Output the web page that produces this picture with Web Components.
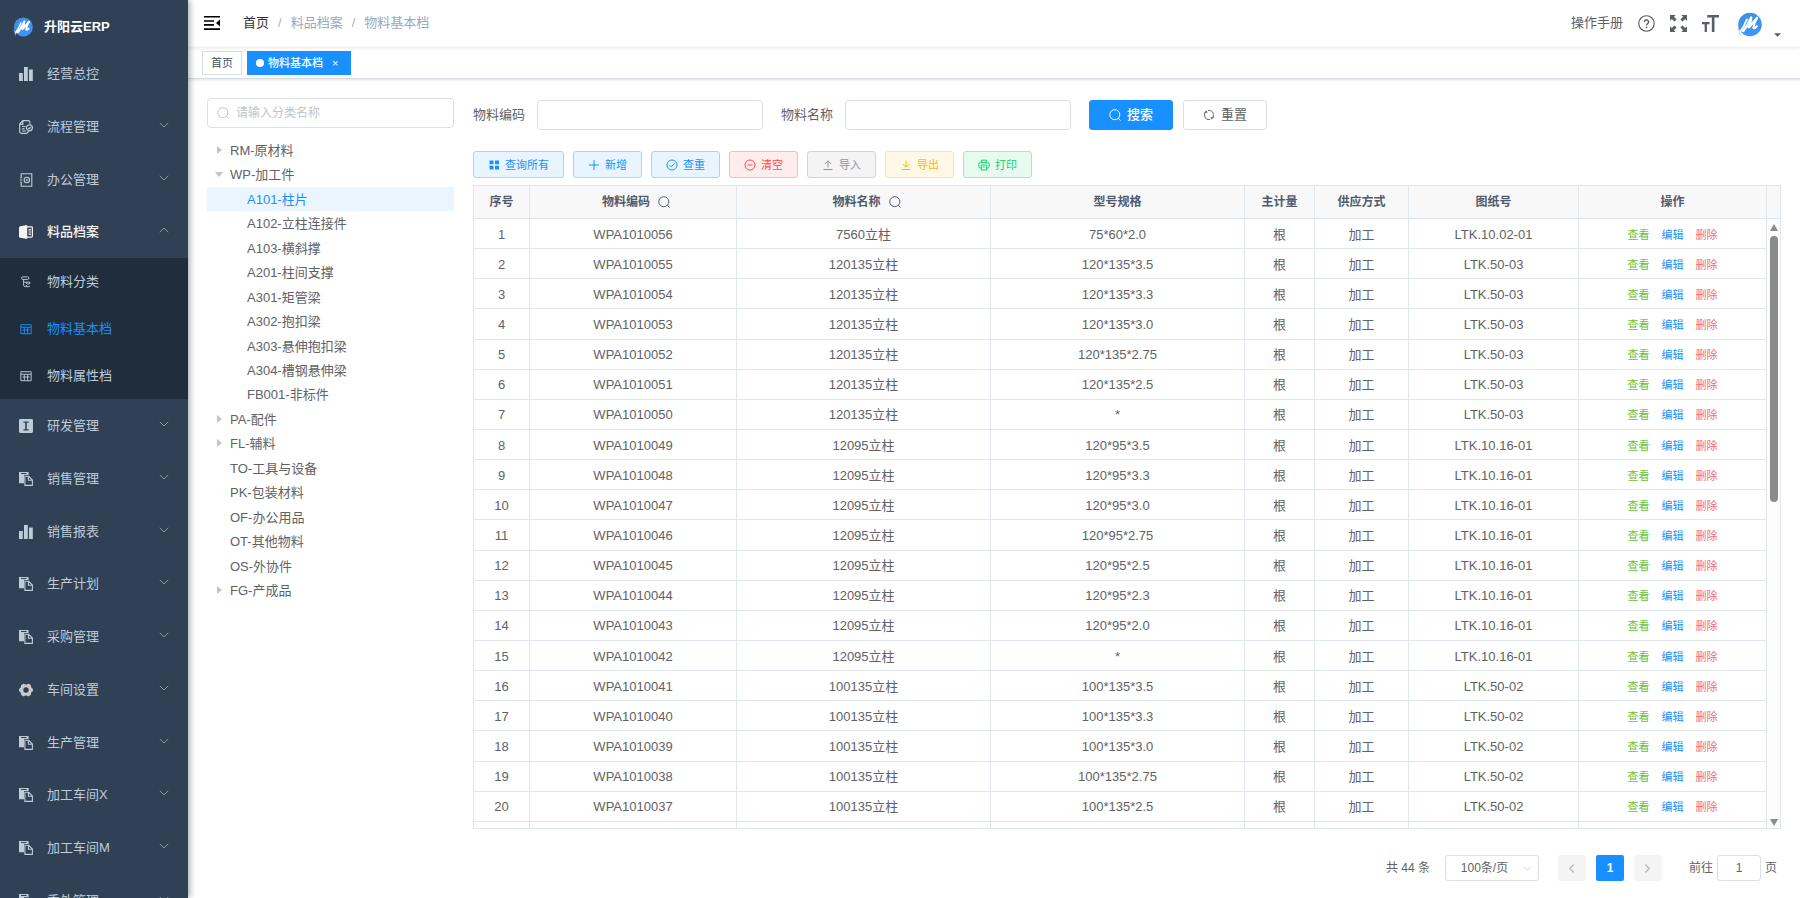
<!DOCTYPE html>
<html lang="zh-CN">
<head>
<meta charset="utf-8">
<meta name="viewport" content="width=device-width, initial-scale=1">
<title>升阳云ERP - 物料基本档</title>
<style>
html, body { margin: 0; height: 100%; overflow: hidden; }
body {
  font: 13px/20px "Liberation Sans", "Noto Sans CJK SC", sans-serif;
  color: #606266;
  background: #fff;
  --primary: #1890ff;
  --line: #dfe6ec;
  --field: #dcdfe6;
}
</style>
</head>
<body>
<erp-app></erp-app>

<script>
const BASE = `
  *, *::before, *::after { box-sizing: border-box; }
  button, input, select { font: inherit; color: inherit; margin: 0; }
  button { cursor: pointer; }
  a { color: inherit; text-decoration: none; }
  ul, ol { list-style: none; margin: 0; padding: 0; }
`;

function define(name, css, render) {
  customElements.define(name, class extends HTMLElement {
    constructor() {
      super();
      this.attachShadow({ mode: 'open' });
    }
    connectedCallback() {
      const t = document.createElement('template');
      t.innerHTML = `<style>${BASE}${css}</style>${render(this)}`;
      this.shadowRoot.replaceChildren(t.content.cloneNode(true));
    }
  });
}

/* ---------- icons ---------- */
const ICONS = {
  chart: ['0 0 14 14', '<path fill="currentColor" d="M0 6h3.8v8H0zM5 0h3.8v14H5zM10 2.6h3.8V14H10z"/>'],
  flow: ['0 0 14 14', '<g fill="none" stroke="currentColor" stroke-width="1.2"><path d="M8.5 13.3H2.2a1.5 1.5 0 0 1-1.5-1.5V4l3-3.3h5.6a1.5 1.5 0 0 1 1.5 1.5v1.6M.8 4.3h3V1M3 6.5h3.500M3 8.8h2.6M3 11h4"/><circle cx="10.4" cy="7.800" r="3"/><path d="M9 7.800l1.1 1.1 1.600-2M9.500 10.800L8.500 13"/></g>'],
  office: ['0 0 14 14', '<g fill="none" stroke="currentColor" stroke-width="1.1"><path d="M2.2 4V.7h10.6v12.6H2.2V10"/><path d="M1 4.8h2.2M1 7h2.2M1 9.2h2.2"/><circle cx="7.8" cy="7" r="2.7"/></g><circle cx="7.8" cy="7" r="1" fill="currentColor"/>'],
  book: ['0 0 14 14', '<path fill="currentColor" d="M8.200 0v14L1.4 12.8Q0 12.5 0 11.4V2.7q0-1.1 1.4-1.4z"/><path fill="none" stroke="currentColor" stroke-width="1.200" d="M8 1.9h4.6q.8 0 .8.8v8.6q0 .8-.8.8H8M9.500 4.800h2.600M9.500 7h2.600M9.500 9.200h2.600"/>'],
  tree: ['0 0 14 14', '<g fill="none" stroke="currentColor" stroke-width="1.1"><rect x="1.800" y="1" width="8.600" height="3" rx="1.500"/><path d="M4.2 4v6.6q0 1.800 1.800 1.800h5.400M4.200 7.200h7.200"/><path d="M7.400 7.200q-.400 2 1 2h3V7M7.400 10.500v1.900"/></g>'],
  table: ['0 0 14 14', '<path fill="none" stroke="currentColor" stroke-width="1.1" d="M1 2h12v10.500H1zM1 5h12M3 8.200h8M5 5v7.500M9 5v7.500"/>'],
  research: ['0 0 14 14', '<path fill="currentColor" fill-rule="evenodd" d="M1.4 0h11.2Q14 0 14 1.4v11.2q0 1.4-1.4 1.4H1.4Q0 14 0 12.6V1.4Q0 0 1.4 0zM4.4 2.6v1.2h1.8v6.4H4.4v1.2h5.2v-1.2H7.8V3.8h1.8V2.6z"/>'],
  clip: ['0 0 14 14', '<path fill="currentColor" fill-rule="evenodd" d="M0 0h9.6v3H5v8.2H0zM2 1v.9h5.6V1z"/><path fill="none" stroke="currentColor" stroke-width="1.1" d="M5.9 4.2h3.8L13.4 8v5.4H5.9zM9.4 4.4v3.8h3.8"/>'],
  gear: ['0 0 14 14', '<path fill="#c9c9c9" fill-rule="evenodd" d="M4.2.7Q5.2.6 5.8 1.2q1.2.8 2.4 0 .6-.6 1.6-.5l1.9 1.2q.5.7.3 1.6 0 1.3 1.2 1.7.8.4.8 1.8t-.8 1.8Q12 9.2 12 10.5q.2.9-.3 1.6l-1.9 1.2q-1 .1-1.6-.5-1.2-.8-2.4 0-.6.6-1.6.5l-1.9-1.2q-.5-.7-.3-1.6 0-1.3-1.2-1.7Q0 8.400 0 7t.8-1.800Q2 4.800 2 3.500q-.2-.9.3-1.600zM7 4.300a2.700 2.700 0 1 0 0 5.400 2.700 2.700 0 0 0 0-5.400z"/>'],
  down: ['0 0 10 6', '<path fill="none" stroke="currentColor" stroke-width="1" d="M.8.8L5 5 9.200.8"/>'],
  up: ['0 0 10 6', '<path fill="none" stroke="currentColor" stroke-width="1" d="M.8 5.200L5 1l4.200 4.200"/>'],
  left: ['0 0 8 12', '<path fill="none" stroke="currentColor" stroke-width="1.500" d="M6.500 1.500L2 6l4.500 4.500"/>'],
  right: ['0 0 8 12', '<path fill="none" stroke="currentColor" stroke-width="1.500" d="M1.500 1.500L6 6l-4.500 4.500"/>'],
  fold: ['0 0 16 14', '<path fill="currentColor" d="M0 0h16v1.600H0zM0 4.200h10v1.600H0zM0 8.100h10v1.600H0zM0 12.300h16v1.600H0zM16 3.500v7L12 7z"/>'],
  search: ['0 0 12 12', '<g fill="none" stroke="currentColor"><circle cx="5.800" cy="5.700" r="5"/><path d="M9.300 9.300l2.200 2.200"/></g>'],
  help: ['0 0 18 18', '<g fill="none" stroke="currentColor" stroke-width="1.200"><circle cx="9" cy="9" r="8.200"/><path stroke-width="1.500" d="M6.800 7.300a2.200 2.200 0 1 1 3.400 1.800Q9 9.900 9 11.200"/></g><circle cx="9" cy="13" r=".9" fill="currentColor"/>'],
  full: ['0 0 18 18', '<path fill="currentColor" d="M0 0h6L4.200 1.900 7 4.700 4.700 7 1.900 4.200 0 6zM18 0h-6l1.800 1.900L11 4.700 13.300 7l2.800-2.800L18 6zM0 18h6l-1.800-1.900L7 13.300 4.700 11l-2.800 2.800L0 12zM18 18h-6l1.800-1.900-2.800-2.800 2.300-2.300 2.800 2.800L18 12z"/>'],
  size: ['0 0 18 18', '<path fill="currentColor" d="M5.500 0H18v2.600h-4.800V18h-2.800V2.600H5.500zM0 7.400h8v2.300H5.200V18H2.800V9.700H0z"/>'],
  caret: ['0 0 8 4', '<path fill="currentColor" d="M0 0h8L4 4z"/>'],
  grid: ['0 0 12 12', '<path fill="currentColor" d="M1.500 1.500h4v3.800h-4zM7 1.500h4v3.800H7zM1.500 6.800h4v3.800h-4zM7 6.800h4v3.800H7z"/>'],
  plus: ['0 0 12 12', '<path stroke="currentColor" d="M6 1v10M1 6h10"/>'],
  check: ['0 0 12 12', '<g fill="none" stroke="currentColor"><circle cx="6" cy="6" r="5"/><path d="M3.600 6.200l1.700 1.700 3.200-3.600"/></g>'],
  minus: ['0 0 12 12', '<g fill="none" stroke="currentColor"><circle cx="6" cy="6" r="5"/><path d="M3.500 6h5"/></g>'],
  upload: ['0 0 12 12', '<path fill="none" stroke="currentColor" d="M1.500 10.500h9M6 8.500V2M2.800 5L6 1.800 9.200 5"/>'],
  download: ['0 0 12 12', '<path fill="none" stroke="currentColor" d="M1.500 10.500h9M6 1.500V8M2.800 5L6 8.200 9.200 5"/>'],
  print: ['0 0 12 12', '<g fill="none" stroke="currentColor"><path d="M3.300 3.600V1.200h5.400v2.400M3.300 9H2.200A1.500 1.500 0 0 1 .8 7.500V5a1.500 1.500 0 0 1 1.400-1.400h7.600A1.500 1.500 0 0 1 11.200 5v2.500A1.500 1.500 0 0 1 9.800 9H8.700"/><path d="M3.300 6h5.400v5H3.300zM4.800 8h2"/></g>'],
  refresh: ['0 0 12 12', '<g fill="none" stroke="currentColor"><path d="M1.500 7A4.600 4.600 0 0 1 3.400 2.300M5 1.500a4.600 4.600 0 0 1 5.500 3.500M10.500 5.500a4.600 4.600 0 0 1-1.900 4.200M7 10.500a4.600 4.600 0 0 1-5.300-3.500"/><path d="M1.200 3.900L3.500 2.100 4 4M10.800 8.100L8.500 9.900 8 8"/></g>'],
  logo: ['0 0 26 26', '<defs><linearGradient id="g" x1="0" y1="0" x2="0" y2="1"><stop offset="0" stop-color="#3f8fea"/><stop offset="1" stop-color="#3a97f6"/></linearGradient></defs><circle cx="13.500" cy="13" r="12.300" fill="url(#g)"/><g fill="none" stroke="#fff" stroke-linecap="round" stroke-linejoin="round"><path stroke-width="2" d="M3.400 20.500Q7.500 15 10.200 7.800"/><path stroke-width="2.600" d="M6.500 19.800Q11.500 13.500 14.800 5.800 13.600 12 12.400 15.800 17 10.500 20.800 6.200"/><path stroke-width="2.200" d="M20.800 6.200Q17.500 12 17 16.500q1 1 3.600-1.700"/></g><path fill="none" stroke="#9cc8fa" stroke-width="1" d="M1 17l1.500 3M2.500 21l1 3"/>']
};
define('erp-icon', `
  :host { display: inline-block; flex: none; width: 12px; height: 12px; }
  svg { display: block; width: 100%; height: 100%; }
`, el => {
  const [box, body] = ICONS[el.getAttribute('name')];
  return `<svg viewBox="${box}" aria-hidden="true">${body}</svg>`;
});

/* ---------- sidebar ---------- */
const MENU = [
  ['chart', '经营总控', 'leaf'], ['flow', '流程管理'], ['office', '办公管理'], ['book', '料品档案', 'open'],
  ['research', '研发管理'], ['clip', '销售管理'], ['chart', '销售报表'], ['clip', '生产计划'],
  ['clip', '采购管理'], ['gear', '车间设置'], ['clip', '生产管理'], ['clip', '加工车间X'],
  ['clip', '加工车间M'], ['clip', '委外管理']
];
const SUBMENU = [['tree', '物料分类'], ['table', '物料基本档', 'active'], ['table', '物料属性档']];

define('nav-entry', `
  :host { display: block; height: 53px; color: #bfcbd9; }
  :host([kind=sub]) { height: 47px; }
  :host([kind=sub]) .mark { width: 12px; height: 12px; margin: 0 15px 0 1px; }
  :host([state=open]) { color: #f4f4f5; font-weight: 500; }
  :host([state=active]) { color: var(--primary); }
  a { display: flex; align-items: center; height: 100%; padding: 0 19px; }
  .mark { width: 14px; height: 14px; margin-right: 14px; }
  span { flex: 1; white-space: nowrap; }
  .arrow { width: 10px; height: 6px; margin-bottom: 4px; color: #8d97a3; }
`, el => `
  <a href="#"><erp-icon class="mark" name="${el.getAttribute('icon')}"></erp-icon><span><slot></slot></span>
  ${el.hasAttribute('arrow') ? `<erp-icon class="arrow" name="${el.getAttribute('arrow')}"></erp-icon>` : ''}</a>
`);

define('side-bar', `
  :host { display: block; background: #304156; overflow: hidden; box-shadow: 2px 0 6px rgba(0,21,41,.35); }
  .brand { display: flex; align-items: center; gap: 11px; height: 47px; padding: 7px 0 0 13px; color: #fff; font-weight: bold; }
  .brand erp-icon { width: 20px; height: 20px; }
  .sub { background: #1f2d3d; }
  .menu > li:nth-child(4n) > nav-entry { height: 52px; }
`, () => `
  <a class="brand" href="#"><erp-icon name="logo"></erp-icon><span>升阳云ERP</span></a>
  <nav><ul class="menu">${MENU.map(([icon, text, state]) => `
    <li><nav-entry icon="${icon}" state="${state || ''}" ${state === 'leaf' ? '' : `arrow="${state === 'open' ? 'up' : 'down'}"`}>${text}</nav-entry>
    ${state === 'open' ? `<ul class="sub">${SUBMENU.map(([i, t, s]) => `<li><nav-entry kind="sub" icon="${i}" state="${s || ''}">${t}</nav-entry></li>`).join('')}</ul>` : ''}
    </li>`).join('')}</ul></nav>
`);

/* ---------- header ---------- */
define('top-bar', `
  :host { display: flex; align-items: center; justify-content: space-between; height: 47px; padding: 0 19px 1px 16px; box-shadow: 0 1px 4px rgba(0,21,41,.1); position: relative; }
  button { border: 0; background: none; padding: 0; display: block; color: #5a5e66; }
  .left, .right, ol { display: flex; align-items: center; }
  .fold { color: #000; margin-right: 23px; }
  .fold erp-icon { width: 16px; height: 14px; display: block; }
  li { color: #97a8be; }
  li:first-child { color: #303133; }
  li + li::before { content: "/"; margin: 0 9px; color: #a9b1be; }
  .right { gap: 15px; color: #5a5e66; }
  .right erp-icon { width: 17px; height: 17px; display: block; }
  .right .user { display: flex; align-items: flex-end; gap: 12px; margin: 2px 0 0 3px; }
  .right .face { width: 25px; height: 25px; }
  .right .caret { width: 7px; height: 4px; }
`, () => `
  <div class="left">
    <button class="fold" aria-label="收起菜单"><erp-icon name="fold"></erp-icon></button>
    <nav><ol><li><a href="#">首页</a></li><li>料品档案</li><li>物料基本档</li></ol></nav>
  </div>
  <div class="right">
    <a href="#">操作手册</a>
    <button aria-label="帮助"><erp-icon name="help"></erp-icon></button>
    <button aria-label="全屏"><erp-icon name="full"></erp-icon></button>
    <button aria-label="字号"><erp-icon name="size"></erp-icon></button>
    <button class="user" aria-label="用户"><erp-icon class="face" name="logo"></erp-icon><erp-icon class="caret" name="caret"></erp-icon></button>
  </div>
`);

define('page-tabs', `
  :host { display: flex; gap: 5px; align-items: flex-start; height: 32px; padding: 4px 14px; border-bottom: 1px solid #d8dce5; box-shadow: 0 1px 3px rgba(0,0,0,.12); font-size: 11px; }
  a { display: flex; align-items: center; height: 24px; padding: 0 8px; border: 1px solid #d8dce5; color: #495060; }
  a.on { background: var(--primary); border-color: var(--primary); color: #fff; font-weight: 500; padding-right: 12px; }
  a.on::before { content: ""; width: 8px; height: 8px; border-radius: 50%; background: #fff; margin-right: 4px; }
  .x { margin-left: 9px; font-weight: normal; }
`, () => `<a href="#">首页</a><a class="on" href="#">物料基本档<span class="x">×</span></a>`);

/* ---------- category tree ---------- */
const TREE = [
  ['RM-原材料', 0, 'shut'], ['WP-加工件', 0, 'open'],
  ['A101-柱片', 1, 'on'], ['A102-立柱连接件', 1], ['A103-横斜撑', 1], ['A201-柱间支撑', 1], ['A301-矩管梁', 1],
  ['A302-抱扣梁', 1], ['A303-悬伸抱扣梁', 1], ['A304-槽钢悬伸梁', 1], ['FB001-非标件', 1],
  ['PA-配件', 0, 'shut'], ['FL-辅料', 0, 'shut'], ['TO-工具与设备', 0], ['PK-包装材料', 0],
  ['OF-办公用品', 0], ['OT-其他物料', 0], ['OS-外协件', 0], ['FG-产成品', 0, 'shut']
];
define('category-tree', `
  :host { display: block; }
  .find { position: relative; }
  .find erp-icon { position: absolute; left: 10px; top: 9px; color: #c0c4cc; }
  input { display: block; width: 100%; height: 30px; padding: 0 12px 0 28px; border: 1px solid var(--field); border-radius: 4px; font-size: 12px; outline: 0; background: #fff; }
  input::placeholder { color: #c0c4cc; }
  ul { display: grid; grid-auto-rows: 1fr; height: 465px; margin-top: 10px; }
  li { display: flex; align-items: center; gap: 4px; padding: 1px 0 0 5px; white-space: nowrap; }
  li.lv1 { padding-left: 22px; }
  li.on { background: #ebf5ff; color: var(--primary); }
  i { width: 14px; display: grid; place-items: center; margin-bottom: 2px; }
  .shut i::before { content: ""; border: 4px solid transparent; border-left: 5px solid #c0c4cc; border-right: 0; }
  .open i::before { content: ""; border: 4px solid transparent; border-top: 5px solid #c0c4cc; border-bottom: 0; }
`, () => `
  <div class="find"><erp-icon name="search"></erp-icon><input type="text" aria-label="分类名称" placeholder="请输入分类名称"></div>
  <ul>${TREE.map(([t, lv, s]) => `<li class="lv${lv} ${s || ''}"><i></i><span>${t}</span></li>`).join('')}</ul>
`);

/* ---------- buttons and search form ---------- */
define('erp-button', `
  :host { display: block; --fg: #606266; --bg: #fff; --bd: var(--field); }
  :host([tone=main]) { --fg: #fff; --bg: var(--primary); --bd: var(--primary); font-weight: 500; }
  :host([tone=primary]) { --fg: #1890ff; --bg: #e8f4ff; --bd: #a3d3ff; }
  :host([tone=danger]) { --fg: #ff4949; --bg: #ffeded; --bd: #ffb6b6; }
  :host([tone=info]) { --fg: #909399; --bg: #f4f4f5; --bd: #d3d4d6; }
  :host([tone=warning]) { --fg: #ffba00; --bg: #fff8e6; --bd: #ffe399; }
  :host([tone=success]) { --fg: #13ce66; --bg: #e7faf0; --bd: #a1ebc2; }
  button { display: flex; align-items: center; gap: 5px; height: 30px; padding: 0 19px; border: 1px solid var(--bd); border-radius: 3px; background: var(--bg); color: var(--fg); white-space: nowrap; }
  :host(:not([small])) button { gap: 6px; }
  :host([small]) button { height: 27px; padding: 0 14px; font-size: 11px; }
`, el => `<button type="button"><erp-icon name="${el.getAttribute('icon')}"></erp-icon><slot></slot></button>`);

define('search-form', `
  :host { display: block; }
  form { display: flex; align-items: center; gap: 18px; }
  .field { display: flex; align-items: center; gap: 12px; }
  input { width: 226px; height: 30px; padding: 0 12px; border: 1px solid var(--field); border-radius: 4px; outline: 0; background: #fff; }
  .go { display: flex; gap: 10px; }
`, () => `
  <form>
    <div class="field"><label for="code">物料编码</label><input id="code" type="text"></div>
    <div class="field"><label for="name">物料名称</label><input id="name" type="text"></div>
    <div class="go"><erp-button tone="main" icon="search">搜索</erp-button><erp-button icon="refresh">重置</erp-button></div>
  </form>
`);

define('tool-bar', `
  :host { display: flex; gap: 9px; }
`, () => [
  ['primary', 'grid', '查询所有'], ['primary', 'plus', '新增'], ['primary', 'check', '查重'], ['danger', 'minus', '清空'],
  ['info', 'upload', '导入'], ['warning', 'download', '导出'], ['success', 'print', '打印']
].map(([tone, icon, t]) => `<erp-button small tone="${tone}" icon="${icon}">${t}</erp-button>`).join(''));

/* ---------- data table ---------- */
const GROUPS = [
  ['7560立柱', 'LTK.10.02-01', ['75*60*2.0']],
  ['120135立柱', 'LTK.50-03', ['120*135*3.5', '120*135*3.3', '120*135*3.0', '120*135*2.75', '120*135*2.5', '*']],
  ['12095立柱', 'LTK.10.16-01', ['120*95*3.5', '120*95*3.3', '120*95*3.0', '120*95*2.75', '120*95*2.5', '120*95*2.3', '120*95*2.0', '*']],
  ['100135立柱', 'LTK.50-02', ['100*135*3.5', '100*135*3.3', '100*135*3.0', '100*135*2.75', '100*135*2.5']]
];
const ROWS = GROUPS.flatMap(([name, drawing, specs]) => specs.map(spec => [name, spec, drawing]));

define('material-table', `
  :host { display: block; position: relative; overflow: hidden; border: 1px solid var(--line); }
  table { width: 100%; height: 666px; table-layout: fixed; border-collapse: separate; border-spacing: 0; text-align: center; }
  .c-no { width: 56px; } .c-code { width: 207px; } .c-unit { width: 70px; } .c-way { width: 94px; }
  .c-draw { width: 170px; } .c-ops { width: 188px; } .c-bar { width: 13px; }
  th, td { padding: 0; border: 0 solid var(--line); border-width: 0 1px 1px 0; white-space: nowrap; line-height: 20px; }
  th { height: 33px; background: #f8f8f9; color: #515a6e; font-size: 12px; font-weight: bold; }
  td { height: 30px; padding-top: 2px; }
  th:last-child { border-right: 0; }
  td:last-child { border: 0; background: #fcfcfc; }
  th > div, .ops { display: flex; align-items: center; justify-content: center; }
  th > div { gap: 8px; padding-left: 6px; }
  .ops { gap: 12px; font-size: 11px; }
  .view { color: #67c23a; } .edit { color: var(--primary); } .del { color: #f56c6c; }
  .scroll { position: absolute; top: 38px; right: 2px; bottom: 2px; width: 8px; display: flex; flex-direction: column; gap: 5px; }
  .scroll::before, .scroll::after { content: ""; border: 4px solid transparent; }
  .scroll::before { border-top: 0; border-bottom: 7px solid #8b8b8b; }
  .scroll::after { border-bottom: 0; border-top: 7px solid #8b8b8b; }
  .rail { flex: 1; }
  .rail::before { content: ""; display: block; height: 46%; border-radius: 4px; background: #8b8b8b; }
`, () => `
  <table>
    <colgroup><col class="c-no"><col class="c-code"><col><col><col class="c-unit"><col class="c-way"><col class="c-draw"><col class="c-ops"><col class="c-bar"></colgroup>
    <thead><tr><th>序号</th><th><div>物料编码<erp-icon name="search"></erp-icon></div></th><th><div>物料名称<erp-icon name="search"></erp-icon></div></th><th>型号规格</th><th>主计量</th><th>供应方式</th><th>图纸号</th><th>操作</th><th></th></tr></thead>
    <tbody>${ROWS.map(([name, spec, drawing], i) => `
      <tr><td>${i + 1}</td><td>WPA10100${56 - i}</td><td>${name}</td><td>${spec}</td><td>根</td><td>加工</td><td>${drawing}</td>
      <td><div class="ops"><a class="view" href="#">查看</a><a class="edit" href="#">编辑</a><a class="del" href="#">删除</a></div></td><td></td></tr>`).join('')}
      <tr>${'<td></td>'.repeat(9)}</tr>
    </tbody>
  </table>
  <div class="scroll"><div class="rail"></div></div>
`);

/* ---------- pagination ---------- */
define('page-nav', `
  :host { display: flex; align-items: center; justify-content: flex-end; height: 26px; padding-right: 4px; font-size: 12px; }
  .size { position: relative; margin: 0 19px 0 15px; }
  select { display: block; appearance: none; width: 94px; height: 26px; padding: 0 20px 0 5px; border: 1px solid var(--field); border-radius: 3px; background: #fff; text-align: center; text-align-last: center; }
  .size erp-icon { position: absolute; right: 7px; top: 11px; width: 9px; height: 5px; color: #c0c4cc; pointer-events: none; }
  .pages { display: flex; gap: 10px; margin-right: 27px; }
  button { display: grid; place-items: center; width: 28px; height: 26px; padding: 0; border: 0; border-radius: 2px; background: #f4f4f5; color: #b4b8bf; font-weight: bold; }
  button.on { background: var(--primary); color: #fff; }
  button erp-icon { width: 7px; height: 11px; }
  .jump { display: flex; align-items: center; gap: 4px; }
  input { width: 44px; height: 26px; border: 1px solid var(--field); border-radius: 3px; text-align: center; padding: 0; }
`, () => `
  <span>共 44 条</span>
  <div class="size"><select aria-label="每页条数"><option>100条/页</option></select><erp-icon name="down"></erp-icon></div>
  <div class="pages"><button aria-label="上一页"><erp-icon name="left"></erp-icon></button><button class="on">1</button><button aria-label="下一页"><erp-icon name="right"></erp-icon></button></div>
  <label class="jump">前往<input type="text" value="1">页</label>
`);

/* ---------- shell ---------- */
define('erp-app', `
  :host { display: grid; grid-template-columns: 188px minmax(0, 1fr); height: 100vh; }
  side-bar { position: relative; z-index: 1; height: 100vh; }
  .page { display: flex; flex-direction: column; min-height: 0; height: 100vh; }
  main { flex: 1; min-height: 0; display: grid; grid-template-columns: 247px minmax(0, 1fr); grid-template-rows: minmax(0, 1fr); gap: 19px; padding: 19px 19px 17px; }
  section { display: flex; flex-direction: column; min-height: 0; padding-top: 2px; }
  tool-bar { margin: 21px 0 7px; }
  material-table { flex: 1; min-height: 0; margin-bottom: 26px; }
`, () => `
  <side-bar></side-bar>
  <div class="page">
    <top-bar></top-bar>
    <page-tabs></page-tabs>
    <main>
      <category-tree></category-tree>
      <section>
        <search-form></search-form>
        <tool-bar></tool-bar>
        <material-table></material-table>
        <page-nav></page-nav>
      </section>
    </main>
  </div>
`);
</script>
</body>
</html>
